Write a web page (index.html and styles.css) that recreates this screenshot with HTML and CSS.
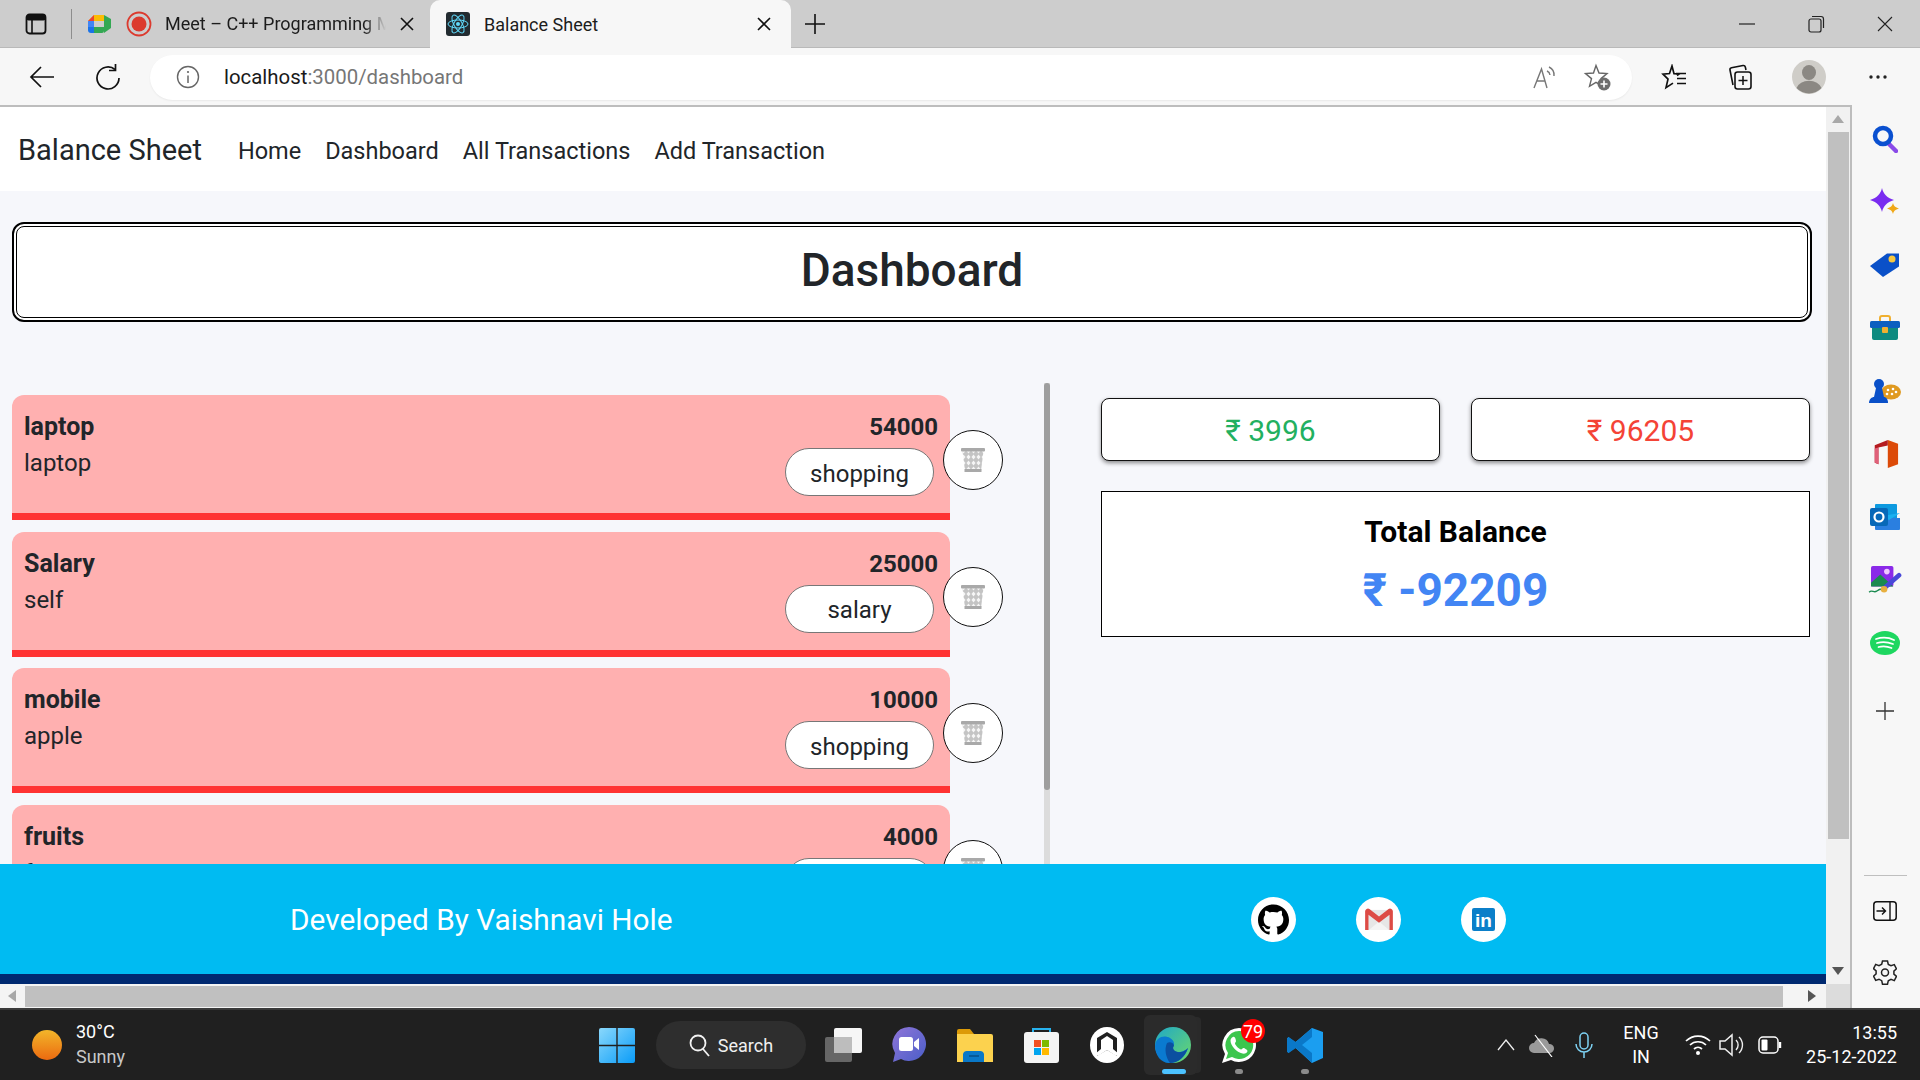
FILE: index.html
```html
<!DOCTYPE html>
<html lang="en">
<head>
<meta charset="utf-8">
<title>Balance Sheet</title>
<link rel="stylesheet" href="styles.css">
</head>
<body>
<svg class="sprite" aria-hidden="true">
  <defs>
    <pattern id="mesh" width="5" height="6" patternUnits="userSpaceOnUse">
      <rect width="5" height="6" fill="#c4c4c4"/>
      <path d="M2.500 .4 4.500 3 2.500 5.600 .5 3Z" fill="#f6f6f6"/>
    </pattern>
    <symbol id="trash" viewBox="0 0 24 24">
      <path d="M1.500 3h21L20 23H4Z" fill="url(#mesh)"/>
      <rect x="0" y="0" width="24" height="3.500" rx="1" fill="#a9a9a9"/>
      <rect x="3.500" y="21" width="17" height="3" fill="#a9a9a9"/>
    </symbol>
    <symbol id="x" viewBox="0 0 16 16">
      <path d="M2 2 14 14M14 2 2 14" stroke="#111" stroke-width="1.6" fill="none"/>
    </symbol>
  </defs>
</svg>
<div class="window">
  <header class="tabstrip">
    <svg class="tab-toggle" width="24" height="24" viewBox="0 0 24 24"><rect x="2.5" y="2.5" width="19" height="19" rx="3" fill="none" stroke="#111" stroke-width="1.8"/><rect x="2.5" y="2.5" width="19" height="6" rx="2" fill="#111"/><path d="M8 8v13" stroke="#111" stroke-width="1.6"/></svg>
    <span class="tab-sep"></span>
    <div class="tab">
      <svg width="24" height="20" viewBox="0 0 24 20"><path d="M6 1h10v6H0Z" fill="#fbbc04"/><path d="M0 7h6v6H0Z" fill="#4285f4"/><path d="M0 13h6v6H3a3 3 0 0 1-3-3Z" fill="#1a73e8"/><path d="M6 13h10v4a2 2 0 0 1-2 2H6Z" fill="#34a853"/><path d="M16 1v18l7-5V5Z" fill="#34a853"/><path d="M6 1v6H0Z" fill="#ea4335"/></svg>
      <svg class="rec" width="26" height="26" viewBox="0 0 26 26"><circle cx="13" cy="13" r="11.5" fill="none" stroke="#dc3a2e" stroke-width="1.8"/><circle cx="13" cy="13" r="7.5" fill="#dc3a2e"/></svg>
      <span class="tab-title faded">Meet – C++ Programming Masterclass</span>
      <svg class="tab-x" width="16" height="16"><use href="#x"/></svg>
    </div>
    <div class="tab active">
      <svg class="react" width="24" height="24" viewBox="0 0 24 24"><rect width="24" height="24" rx="3" fill="#222b30"/><g fill="none" stroke="#61dafb" stroke-width="1"><ellipse cx="12" cy="12" rx="10" ry="4"/><ellipse cx="12" cy="12" rx="10" ry="4" transform="rotate(60 12 12)"/><ellipse cx="12" cy="12" rx="10" ry="4" transform="rotate(120 12 12)"/></g><circle cx="12" cy="12" r="2" fill="#61dafb"/></svg>
      <span class="tab-title">Balance Sheet</span>
      <svg class="tab-x" width="16" height="16"><use href="#x"/></svg>
    </div>
    <svg class="new-tab" width="22" height="22" viewBox="0 0 22 22"><path d="M11 1v20M1 11h20" stroke="#111" stroke-width="1.6"/></svg>
    <div class="win-controls">
      <svg width="16" height="16" viewBox="0 0 16 16"><path d="M0 8h16" stroke="#222" stroke-width="1.2"/></svg>
      <svg width="18" height="18" viewBox="0 0 18 18"><rect x="2" y="4" width="12" height="13" rx="2" fill="none" stroke="#222" stroke-width="1.2"/><path d="M5 1.5h9a2.5 2.5 0 0 1 2.5 2.5v9" fill="none" stroke="#222" stroke-width="1.2"/></svg>
      <svg width="16" height="16" viewBox="0 0 16 16"><path d="M1 1 15 15M15 1 1 15" stroke="#222" stroke-width="1.1"/></svg>
    </div>
  </header>

  <div class="toolbar">
    <span class="tool first"><svg width="26" height="24" viewBox="0 0 26 24"><path d="M25 12H2M12 2 2 12l10 10" fill="none" stroke="#111" stroke-width="1.7"/></svg></span>
    <span class="tool gap22"><svg width="26" height="28" viewBox="0 0 26 28"><path d="M20 6.5A11 11 0 1 0 24 15" fill="none" stroke="#111" stroke-width="1.7"/><path d="M20.500 1v6.500H14" fill="none" stroke="#111" stroke-width="1.7"/></svg></span>
    <div class="omnibox">
      <svg width="24" height="24" viewBox="0 0 24 24"><circle cx="12" cy="12" r="10.500" fill="none" stroke="#666" stroke-width="1.4"/><path d="M12 10.500V18" stroke="#666" stroke-width="1.500"/><circle cx="12" cy="7" r="1.100" fill="#666"/></svg>
      <span class="url"><span class="url-host">localhost</span>:3000/dashboard</span>
      <span class="omni-end">
        <svg width="26" height="26" viewBox="0 0 26 26"><path d="M2 24 9.500 5 15 24M4.500 17h8" fill="none" stroke="#777" stroke-width="1.400"/><path d="M15 7a5 5 0 0 1 3 4M17 3a9 9 0 0 1 5 9" fill="none" stroke="#777" stroke-width="1.400"/></svg>
        <svg width="28" height="28" viewBox="0 0 28 28"><path d="M13 2.500 16 10l8 .6-6 5 2 7.900-7-4.200-6.500 4L8.500 15.600 2.500 10.600l8-.6Z" fill="none" stroke="#666" stroke-width="1.400"/><circle cx="21" cy="21" r="6.500" fill="#6d6d6d"/><path d="M21 17.500v7M17.500 21h7" stroke="#fff" stroke-width="1.600"/></svg>
      </span>
    </div>
    <span class="tool gap20"><svg width="26" height="26" viewBox="0 0 26 26"><path d="M15 11.500 17 10l-5-.4L10 2 7.500 9.500l-6.500.6 5 5-2 8.500 7-4.500" fill="none" stroke="#111" stroke-width="1.700" transform="translate(1 0)"/><path d="M15 9.500h10M16 14.500h9M16 19.500h9" fill="none" stroke="#111" stroke-width="1.700"/></svg></span>
    <span class="tool gap22"><svg width="26" height="28" viewBox="0 0 26 28"><path d="M6 22 3 7a2 2 0 0 1 1.500-2.300L16 2.500a2 2 0 0 1 2.300 1.500l.7 3" fill="none" stroke="#111" stroke-width="1.600"/><rect x="8" y="9" width="16" height="17" rx="2.500" fill="#f7f7f7" stroke="#111" stroke-width="1.600"/><path d="M16 13v9M11.500 17.500h9" stroke="#111" stroke-width="1.500"/></svg></span>
    <span class="tool gap25"><svg width="34" height="34" viewBox="0 0 34 34"><circle cx="17" cy="17" r="17" fill="#cfcdc8"/><ellipse cx="17" cy="12.500" rx="7" ry="7.500" fill="#8b8883"/><path d="M4.500 28a13 10 0 0 1 25 0 17 17 0 0 1-25 0Z" fill="#8b8883"/></svg></span>
    <span class="tool gap25"><svg width="20" height="6" viewBox="0 0 20 6"><circle cx="3" cy="3" r="1.700" fill="#222"/><circle cx="10" cy="3" r="1.700" fill="#222"/><circle cx="17" cy="3" r="1.700" fill="#222"/></svg></span>
  </div>

  <div class="viewport-row">
    <div class="viewport">
      <div class="viewport-inner">
        <div class="page">
          <nav class="navbar">
            <a class="brand">Balance Sheet</a>
            <a class="nav-link">Home</a>
            <a class="nav-link">Dashboard</a>
            <a class="nav-link">All Transactions</a>
            <a class="nav-link">Add Transaction</a>
          </nav>
          <main class="main">
            <h1 class="page-title">Dashboard</h1>
            <div class="columns">
              <div class="list-wrap">
                <div class="tx-list">
                  <div class="tx-row">
                    <article class="tx-card">
                      <div><div class="tx-name">laptop</div><div class="tx-desc">laptop</div></div>
                      <div class="tx-right"><div class="tx-amount">54000</div><span class="tx-pill">shopping</span></div>
                    </article>
                    <button class="tx-del"><svg width="24" height="24"><use href="#trash"/></svg></button>
                  </div>
                  <div class="tx-row">
                    <article class="tx-card">
                      <div><div class="tx-name">Salary</div><div class="tx-desc">self</div></div>
                      <div class="tx-right"><div class="tx-amount">25000</div><span class="tx-pill">salary</span></div>
                    </article>
                    <button class="tx-del"><svg width="24" height="24"><use href="#trash"/></svg></button>
                  </div>
                  <div class="tx-row">
                    <article class="tx-card">
                      <div><div class="tx-name">mobile</div><div class="tx-desc">apple</div></div>
                      <div class="tx-right"><div class="tx-amount">10000</div><span class="tx-pill">shopping</span></div>
                    </article>
                    <button class="tx-del"><svg width="24" height="24"><use href="#trash"/></svg></button>
                  </div>
                  <div class="tx-row">
                    <article class="tx-card">
                      <div><div class="tx-name">fruits</div><div class="tx-desc">farmart</div></div>
                      <div class="tx-right"><div class="tx-amount">4000</div><span class="tx-pill">shopping</span></div>
                    </article>
                    <button class="tx-del"><svg width="24" height="24"><use href="#trash"/></svg></button>
                  </div>
                </div>
                <div class="list-track"><div class="list-thumb"></div></div>
              </div>
              <aside class="summary">
                <div class="summary-pair">
                  <div class="stat income">₹ 3996</div>
                  <div class="stat expense">₹ 96205</div>
                </div>
                <div class="total">
                  <div class="total-label">Total Balance</div>
                  <div class="total-value">₹ -92209</div>
                </div>
              </aside>
            </div>
          </main>
          <footer class="footer">
            <span class="footer-text">Developed By Vaishnavi Hole</span>
            <div class="footer-links">
              <span class="social"><svg width="31" height="31" viewBox="0 0 24 24"><path d="M12 .297c-6.630 0-12 5.373-12 12 0 5.303 3.438 9.800 8.205 11.385.6.113.82-.258.82-.577 0-.285-.01-1.040-.015-2.040-3.338.724-4.042-1.610-4.042-1.610C4.422 18.070 3.633 17.700 3.633 17.700c-1.087-.744.084-.729.084-.729 1.205.084 1.838 1.236 1.838 1.236 1.070 1.835 2.809 1.305 3.495.998.108-.776.417-1.305.76-1.605-2.665-.3-5.466-1.332-5.466-5.930 0-1.310.465-2.380 1.235-3.220-.135-.303-.54-1.523.105-3.176 0 0 1.005-.322 3.300 1.230.96-.267 1.980-.399 3-.405 1.020.006 2.040.138 3 .405 2.280-1.552 3.285-1.230 3.285-1.230.645 1.653.24 2.873.12 3.176.765.84 1.230 1.910 1.230 3.220 0 4.610-2.805 5.625-5.475 5.920.42.36.81 1.096.81 2.220 0 1.606-.015 2.896-.015 3.286 0 .315.21.69.825.57C20.565 22.092 24 17.592 24 12.297c0-6.627-5.373-12-12-12" fill="#000"/></svg></span>
              <span class="social"><svg width="28" height="22" viewBox="0 0 29 23"><path d="M1 2h27v21H1Z" fill="#e6e6e6"/><path d="M4 23 14.500 14 25 23Z" fill="#f4f4f4"/><path d="M0 3.500A3 3 0 0 1 4.500 1l10 8 10-8A3 3 0 0 1 29 3.500V23h-3.500V7l-11 8.500L3.500 7v16H0Z" fill="#dd4b45"/></svg></span>
              <span class="social"><svg width="23" height="23" viewBox="0 0 23 23"><rect width="23" height="23" rx="2" fill="#0b7fc9"/><text x="11.500" y="19" text-anchor="middle" class="in-mark">in</text></svg></span>
            </div>
          </footer>
        </div>
        <div class="vscroll">
          <svg width="12" height="8" viewBox="0 0 12 8"><path d="M6 0 12 8H0Z" fill="#a8a8a8"/></svg>
          <div class="vscroll-thumb"></div>
          <svg class="vscroll-down" width="12" height="8" viewBox="0 0 12 8"><path d="M0 0H12L6 8Z" fill="#555"/></svg>
        </div>
      </div>
      <div class="hscroll">
        <svg width="8" height="12" viewBox="0 0 8 12"><path d="M8 0V12L0 6Z" fill="#a8a8a8"/></svg>
        <div class="hscroll-thumb"></div>
        <svg width="8" height="12" viewBox="0 0 8 12"><path d="M0 0V12L8 6Z" fill="#555"/></svg>
        <div class="hscroll-corner"></div>
      </div>
    </div>

    <aside class="sidebar">
      <svg width="26" height="28" viewBox="0 0 26 28"><path d="M16 18l8 8" stroke="#8a4be8" stroke-width="4.500" stroke-linecap="round"/><circle cx="11" cy="11" r="8" fill="none" stroke="#0a50d0" stroke-width="4.500"/></svg>
      <svg width="30" height="28" viewBox="0 0 30 28"><path d="M12 0c1.500 6 4.500 9.500 12 12-7.500 2.500-10.500 6-12 12-1.500-6-4.500-9.500-12-12 7.500-2.500 10.500-6 12-12Z" fill="#7a2cf0"/><path d="M23 15c.8 3 2.200 4.400 6 5.500-3.800 1.100-5.200 2.500-6 5.500-.8-3-2.200-4.400-6-5.500 3.800-1.100 5.200-2.500 6-5.500Z" fill="#f0a818"/></svg>
      <svg width="30" height="26" viewBox="0 0 30 26"><path d="M0 14 17 1.500h12v13L13 25Z" fill="#0a50c8"/><circle cx="22" cy="7" r="3.500" fill="#f8c840"/></svg>
      <svg width="30" height="26" viewBox="0 0 30 26"><path d="M10 7V3a2 2 0 0 1 2-2h6a2 2 0 0 1 2 2v4" fill="none" stroke="#f0b030" stroke-width="2"/><rect x="2" y="10" width="26" height="15" rx="2" fill="#0e8a80"/><rect y="6" width="30" height="7" rx="1.500" fill="#0a5fc0"/><rect x="12" y="12" width="6" height="6" rx="1" fill="#f0b030"/></svg>
      <svg width="32" height="26" viewBox="0 0 32 26"><ellipse cx="22" cy="14" rx="10" ry="7.500" fill="#e09a20"/><g fill="#fff"><circle cx="19" cy="12" r="1.300"/><circle cx="24" cy="11" r="1.300"/><circle cx="27" cy="14" r="1.300"/><circle cx="23" cy="16" r="1.300"/><circle cx="18" cy="16" r="1.300"/></g><circle cx="10" cy="6" r="5" fill="#0a50c8"/><path d="M7 10h6l2 9h-10Z" fill="#0a50c8"/><path d="M0 25c0-4 3-6 5-6h10c2 0 4 2 4 6Z" fill="#0a50c8"/></svg>
      <svg width="30" height="30" viewBox="0 0 30 30"><path d="M18 0 29 4v22l-11 4Z" fill="#dc4a08"/><path d="M18 0 4 5.500v19L18 30l-10-4V8l10-2Z" fill="#b51c20"/><path d="M8 8 4 9v15l4 2Z" fill="#e0607a"/></svg>
      <svg width="30" height="26" viewBox="0 0 30 26"><rect x="5" y="0" width="22" height="24" rx="1" fill="#0d9ae0"/><path d="M5 14h25v11a1 1 0 0 1-1 1H6a1 1 0 0 1-1-1Z" fill="#2a7fe0"/><path d="M30 9 19 16l-7-4" fill="#1ab0f0"/><rect y="4" width="18" height="18" rx="2" fill="#0768b8"/><circle cx="9" cy="13" r="4.500" fill="none" stroke="#fff" stroke-width="2.200"/></svg>
      <svg width="34" height="30" viewBox="0 0 34 30"><rect x="2" y="0" width="24" height="22" rx="2" fill="#8a2ae8"/><circle cx="19" cy="6" r="3" fill="#f0c8ff"/><path d="M2 18 12 9l14 13H2Z" fill="#1a8a50"/><path d="M0 28c3-3 5 1 8-1s4-3 6-1" fill="none" stroke="#1a8a50" stroke-width="1.500"/><path d="M32 10 17 23" stroke="#4848d8" stroke-width="5" stroke-linecap="round"/><circle cx="16" cy="25" r="3.500" fill="#e8b040"/></svg>
      <svg width="30" height="24" viewBox="0 0 30 24"><ellipse cx="15" cy="12" rx="15" ry="12" fill="#1ed760"/><path d="M6 8c6-2 13-1.500 18 1M7 12c5-1.500 11-1 16 1M8.500 16c4-1 9-.7 13 1" fill="none" stroke="#fff" stroke-width="1.800" stroke-linecap="round"/></svg>
      <svg class="side-plus" width="18" height="18" viewBox="0 0 18 18"><path d="M9 0v18M0 9h18" stroke="#333" stroke-width="1.300"/></svg>
      <div class="side-bottom">
        <span class="side-divider"></span>
        <svg width="24" height="20" viewBox="0 0 24 20"><rect x=".8" y=".8" width="22.400" height="18.400" rx="3" fill="none" stroke="#111" stroke-width="1.500"/><path d="M17 1v18M3.500 10h9M9 6.500l3.500 3.500L9 13.500" fill="none" stroke="#111" stroke-width="1.400"/></svg>
        <svg class="side-gear" width="24" height="26" viewBox="0 0 24 26"><path d="M9.500 1h5l.8 3.500 2.700 1.300 3.300-1.200 2.200 4.200-2.600 2.300v3l2.600 2.300-2.200 4.200-3.300-1.200-2.700 1.300-.8 3.500h-5l-.8-3.500L6 19.200l-3.300 1.200L.5 16.200l2.600-2.300v-3L.5 8.600l2.200-4.200L6 5.600l2.700-1.300Z" fill="none" stroke="#222" stroke-width="1.500"/><circle cx="12" cy="12.500" r="3.500" fill="none" stroke="#222" stroke-width="1.500"/></svg>
      </div>
    </aside>
  </div>

  <footer class="taskbar">
    <div class="weather">
      <svg width="30" height="30" viewBox="0 0 30 30"><defs><linearGradient id="sun" x1="0" y1="0" x2="0" y2="1"><stop offset="0" stop-color="#f2b62a"/><stop offset="1" stop-color="#ec6a10"/></linearGradient></defs><circle cx="15" cy="15" r="15" fill="url(#sun)"/></svg>
      <div class="weather-text"><div>30°C</div><div class="weather-sub">Sunny</div></div>
    </div>
    <div class="task-center">
      <span class="task-cell"><svg width="36" height="35" viewBox="0 0 36 35"><defs><linearGradient id="win" x1="0" y1="0" x2="1" y2="1"><stop offset="0" stop-color="#8ad8fc"/><stop offset="1" stop-color="#0a9cf8"/></linearGradient></defs><path d="M2 0h15.300v16.800H0V2a2 2 0 0 1 2-2ZM18.700 0H34a2 2 0 0 1 2 2v14.800H18.700ZM0 18.200h17.300V35H2a2 2 0 0 1-2-2ZM18.700 18.200H36V33a2 2 0 0 1-2 2H18.700Z" fill="url(#win)"/></svg></span>
      <div class="task-search"><svg width="21" height="23" viewBox="0 0 21 23"><circle cx="9" cy="9" r="7.500" fill="none" stroke="#f2f2f2" stroke-width="1.800"/><path d="M14 15l6 7" stroke="#f2f2f2" stroke-width="1.800"/></svg><span>Search</span></div>
      <span class="task-cell gap4"><svg width="37" height="34" viewBox="0 0 37 34"><rect y="9" width="27" height="25" rx="2" fill="#666"/><rect x="9" width="28" height="25" rx="2" fill="#f6f6f6"/><rect x="9" y="9" width="18" height="16" fill="#bdbdbd"/></svg></span>
      <span class="task-cell"><svg width="34" height="36" viewBox="0 0 34 36"><defs><linearGradient id="teams" x1="0" y1="0" x2="1" y2="1"><stop offset="0" stop-color="#8f75d8"/><stop offset="1" stop-color="#4a5ec8"/></linearGradient></defs><path d="M17 0a17 17 0 1 1-8 32l-8 3 2-9A17 17 0 0 1 17 0Z" fill="url(#teams)"/><rect x="7" y="10" width="14" height="14" rx="2.500" fill="#fff"/><path d="M22 15l5-4v12l-5-4Z" fill="#fff"/></svg></span>
      <span class="task-cell"><svg width="36" height="33" viewBox="0 0 36 33"><path d="M0 2a2 2 0 0 1 2-2h11l4 5H0Z" fill="#dc9a08"/><path d="M0 5h34a2 2 0 0 1 2 2v26H0Z" fill="#fcd24e"/><path d="M6 33v-8a4 4 0 0 1 4-3h13a4 4 0 0 1 4 3v8Z" fill="#0a78c8"/><path d="M12 27h10" stroke="#064f88" stroke-width="1.500"/></svg></span>
      <span class="task-cell"><svg width="35" height="35" viewBox="0 0 35 35"><path d="M9 6V1h17v5" fill="none" stroke="#27b2ee" stroke-width="2"/><rect y="4" width="35" height="31" rx="3" fill="#f4f4f4"/><rect x="10" y="12" width="7" height="7" fill="#f25022"/><rect x="18" y="12" width="7" height="7" fill="#7fba00"/><rect x="10" y="20" width="7" height="7" fill="#00a4ef"/><rect x="18" y="20" width="7" height="7" fill="#ffb900"/></svg></span>
      <span class="task-cell"><svg width="34" height="36" viewBox="0 0 34 36"><ellipse cx="17" cy="18" rx="17" ry="18" fill="#fff"/><path d="M17 5 7 11v18l10-6 10 6V11Z" fill="#202020"/><path d="M17 9 11 13v10l6-4 6 4V13Z" fill="#fff"/><path d="M8 29l9-6 9 6 3-2-12-10L5 27Z" fill="#fff"/></svg></span>
      <span class="task-cell edge">
        <svg width="36" height="36" viewBox="0 0 36 36"><defs><linearGradient id="edgeA" x1="0" y1="0" x2="1" y2="1"><stop offset="0" stop-color="#1fa8c8"/><stop offset="1" stop-color="#6cd86a"/></linearGradient></defs><circle cx="18" cy="18" r="18" fill="url(#edgeA)"/><path d="M0 19C1 9 10 8 15 11c4 2.500 5 6 3 8-3 3 2 7 7 6 3-.6 6-2 8-4-3 9-10 15-19 15C6 36 0 28 0 19Z" fill="#0a7ad0"/><path d="M12 16c3-2 7 0 7 3-3 3 2 7 7 6 3-.6 5-2 7-4-3 9-10 15-18 15-4-5-6-14-3-20Z" fill="#0b4fa0"/></svg>
        <span class="edge-dot"></span>
      </span>
      <span class="task-cell">
        <svg width="36" height="36" viewBox="0 0 36 36"><path d="M18 1a17 17 0 1 1-8 32l-9 3 3-9A17 17 0 0 1 18 1Z" fill="#fff"/><path d="M18 4a14 14 0 1 1-7 26l-6 2 2-6A14 14 0 0 1 18 4Z" fill="#3cc64d"/><path d="M12 10c2-1 3 3 3 4s-1 1.500-1 2.500 3 5 6 6c1 0 1.500-1.500 2.500-1.500s4 2 4 3c0 2-3 3-5 2.500-6-1-12-8-12-13 0-1.500 1-3 2.500-3.500Z" fill="#fff"/></svg>
        <span class="dot"></span>
        <span class="badge">79</span>
      </span>
      <span class="task-cell">
        <svg width="36" height="36" viewBox="0 0 36 36"><path d="M25 1 36 5v26l-11 5-17-15.500L1.500 26 0 24.500V11.500L1.500 10 8 15.500Z" fill="#1b9ef0"/><path d="M25 1 9 15l-7.500-5L0 11.500v13L1.500 26 9 21l16 15Zm0 9v16l-10-8Z" fill="#0a78c8"/></svg>
        <span class="dot"></span>
      </span>
    </div>
    <div class="tray">
      <span class="tray-cell w36"><svg width="18" height="12" viewBox="0 0 18 12"><path d="M1 11 9 1l8 10" fill="none" stroke="#eee" stroke-width="1.300"/></svg></span>
      <span class="tray-cell w36"><svg width="26" height="24" viewBox="0 0 26 24"><path d="M5 20a5 5 0 0 1 0-10 8 8 0 0 1 15 1 4.500 4.500 0 0 1 1 9Z" fill="#9a9a9a"/><path d="M6 2 23 24" stroke="#fff" stroke-width="1.200"/></svg></span>
      <span class="tray-cell w48"><svg width="18" height="26" viewBox="0 0 18 26"><rect x="5" y="1" width="8" height="16" rx="4" fill="none" stroke="#7ed2f4" stroke-width="1.500"/><path d="M1 12a8 8 0 0 0 16 0M9 20v6" fill="none" stroke="#7ed2f4" stroke-width="1.500"/></svg></span>
      <div class="tray-lang"><div>ENG</div><div>IN</div></div>
      <span class="tray-cell w34 gap7"><svg width="26" height="22" viewBox="0 0 26 22"><path d="M1 7a17 17 0 0 1 24 0M5 11a11.500 11.500 0 0 1 16 0M9 15a6 6 0 0 1 8 0" fill="none" stroke="#fff" stroke-width="1.700"/><circle cx="13" cy="19" r="2" fill="#fff"/></svg></span>
      <span class="tray-cell w34"><svg width="26" height="26" viewBox="0 0 26 26"><path d="M1 9h5l7-6v20l-7-6H1Z" fill="none" stroke="#eee" stroke-width="1.500"/><path d="M17 8a7 7 0 0 1 0 10M20 5a11 11 0 0 1 0 16" fill="none" stroke="#eee" stroke-width="1.400"/></svg></span>
      <span class="tray-cell w42"><svg width="24" height="18" viewBox="0 0 24 18"><rect x="1" y="1" width="19" height="16" rx="4" fill="none" stroke="#fff" stroke-width="1.500"/><rect x="3.500" y="3.500" width="6" height="11" rx="1" fill="#fff"/><path d="M22 6v6" stroke="#fff" stroke-width="2.400"/></svg></span>
      <div class="clock"><div>13:55</div><div>25-12-2022</div></div>
    </div>
  </footer>
</div>
</body>
</html>
```
FILE: styles.css
```css
* { box-sizing: border-box; }
html, body { margin: 0; height: 100%; overflow: hidden; }
body { font-family: Roboto, "Liberation Sans", "Noto Sans", sans-serif; color: #212529; }
svg { display: block; flex: none; }
.sprite { position: absolute; width: 0; height: 0; }
.window { width: 1920px; height: 1080px; display: flex; flex-direction: column; }

/* browser tab strip */
.tabstrip { height: 48px; background: #cdcdcd; display: flex; align-items: center; border-bottom: 1px solid #b9b9b9; flex: none; }
.tab-toggle { margin-left: 24px; }
.tab-sep { width: 1px; height: 30px; background: #8d8d8d; margin-left: 23px; }
.tab { height: 48px; display: flex; align-items: center; }
.tab:first-of-type { margin-left: 16px; width: 342px; }
.rec { margin-left: 14px; }
.tab-title { font-size: 18px; color: #1c1c1c; margin-left: 13px; white-space: nowrap; overflow: hidden; width: 221px; }
.faded { -webkit-mask-image: linear-gradient(90deg, #000 90%, transparent); mask-image: linear-gradient(90deg, #000 90%, transparent); }
.tab-x { margin-left: 13px; }
.tab.active { width: 361px; background: #f7f7f7; border-radius: 10px 10px 0 0; padding-left: 16px; margin-top: 1px; }
.tab.active .tab-title { width: 259px; margin-left: 14px; }
.new-tab { margin-left: 13px; }
.win-controls { margin-left: auto; display: flex; align-items: center; gap: 52px; padding-right: 27px; }

/* toolbar */
.toolbar { height: 57px; background: #f7f7f7; display: flex; align-items: center; flex: none; }
.tool { width: 44px; height: 44px; display: flex; align-items: center; justify-content: center; }
.first { margin-left: 20px; }
.gap20 { margin-left: 20px; }
.gap22 { margin-left: 22px; }
.gap25 { margin-left: 25px; }
.omnibox { margin-left: 20px; width: 1482px; height: 45px; margin-top: 1px; background: #fff; border-radius: 23px; display: flex; align-items: center; padding: 0 21px 0 26px; box-shadow: 0 1px 2px rgba(0,0,0,.06); }
.url { margin-left: 24px; font-size: 20.4px; color: #767676; }
.url-host { color: #1a1a1a; }
.omni-end { margin-left: auto; display: flex; align-items: center; gap: 25px; }

/* viewport */
.viewport-row { flex: none; height: 903px; display: flex; background: #f7f7f7; }
.viewport { width: 1852px; height: 903px; border-top: 2px solid #bdbdbd; border-right: 2px solid #bdbdbd; display: flex; flex-direction: column; }
.viewport-inner { height: 877px; display: flex; flex: none; }
.page { width: 1826px; height: 877px; display: flex; flex-direction: column; background: #f6f7fb; overflow: hidden; }
.navbar { height: 84px; flex: none; background: #fff; display: flex; align-items: center; padding: 3px 0 0 18px; }
.brand { font-size: 29px; margin: -1px 36px 0 0; color: #212529; }
.nav-link { font-size: 23.5px; margin-right: 24px; color: #212529; }

.main { flex: 1; min-height: 0; display: flex; flex-direction: column; overflow: hidden; padding-top: 31px; }
.page-title { margin: 0 14px 61px 12px; height: 100px; flex: none; background: #fff; border: 2px solid #000; outline: 1px solid #000; outline-offset: -5px; border-radius: 12px; display: flex; align-items: center; justify-content: center; padding-bottom: 5px; font-size: 46px; font-weight: 500; color: #212529; }
.columns { flex: 1; min-height: 0; display: flex; }

.list-wrap { width: 1050px; height: 100%; flex: none; display: flex; }
.tx-list { width: 1044px; height: 100%; overflow: hidden; padding: 12px 0 0 12px; flex: none; }
.list-track { width: 6px; height: 100%; flex: none; background: #dcdcdc; }
.list-thumb { height: 407px; background: #9e9e9e; border-radius: 3px; }
.tx-row { display: flex; align-items: flex-start; height: 136.67px; }
.tx-card { width: 938px; height: 125px; flex: none; background: #ffb0b0; border-bottom: 7px solid #ff3333; border-radius: 12px 12px 0 0; padding: 14px 12px 0; display: flex; justify-content: space-between; font-size: 24px; line-height: 36px; }
.tx-name { font-weight: 700; font-size: 25px; }
.tx-right { display: flex; flex-direction: column; align-items: flex-end; }
.tx-amount { font-weight: 700; }
.tx-pill { margin: 3px 4px 0 0; width: 149px; height: 48px; padding-top: 3px; background: #fff; border: 1px solid #777; border-radius: 24px; display: flex; align-items: center; justify-content: center; }
.tx-del { width: 60px; height: 60px; margin: 35px 0 0 -7px; position: relative; padding: 0; background: #fff; border: 1.5px solid #111; border-radius: 50%; display: flex; align-items: center; justify-content: center; }

.summary { width: 709px; margin-left: 51px; padding-top: 15px; flex: none; }
.summary-pair { display: flex; justify-content: space-between; }
.stat { width: 339px; height: 63px; padding-top: 1px; background: #fff; border: 1.5px solid #111; border-radius: 8px; box-shadow: 0 2px 4px rgba(0,0,0,.45); display: flex; align-items: center; justify-content: center; font-size: 30px; }
.income { color: #22b060; }
.expense { color: #f44336; }
.total { margin-top: 30px; height: 146px; background: #fff; border: 1px solid #000; text-align: center; padding-top: 18px; }
.total-label { font-size: 30px; line-height: 44px; font-weight: 700; color: #000; }
.total-value { font-size: 46px; line-height: 66px; font-weight: 700; color: #4285f4; margin-top: 3px; }

.footer { height: 120px; flex: none; background: #00bbf2; border-bottom: 10px solid #002970; display: flex; align-items: center; padding: 0 320px 0 290px; color: #fff; }
.footer-text { font-size: 29.8px; }
.footer-links { margin-left: auto; display: flex; gap: 60px; }
.social { width: 45px; height: 45px; border-radius: 50%; background: #fff; display: flex; align-items: center; justify-content: center; }
.in-mark { font-family: "Liberation Sans", sans-serif; font-weight: 700; font-size: 19px; fill: #fff; }

.vscroll { width: 24px; height: 877px; flex: none; background: #f1f1f1; display: flex; flex-direction: column; align-items: center; padding-top: 8px; }
.vscroll-thumb { width: 21px; height: 707px; margin-top: 9px; background: #c0c0c0; }
.vscroll-down { margin-top: auto; margin-bottom: 9px; }
.hscroll { height: 24px; flex: none; display: flex; align-items: center; background: #f4f4f4; padding-left: 8px; }
.hscroll-thumb { width: 1758px; height: 21px; margin-left: 9px; margin-right: 25px; background: #c0c0c0; }
.hscroll-corner { width: 24px; height: 24px; margin-left: 10px; background: #dcdcdc; }

/* edge sidebar */
.sidebar { width: 68px; height: 903px; display: flex; flex-direction: column; align-items: center; padding: 20px 2px 0 0; }
.sidebar > svg { height: 28px; margin-bottom: 35px; }
.sidebar > .side-plus { margin-top: 5px; margin-bottom: 0; }
.side-bottom { margin-top: auto; padding-bottom: 22px; width: 100%; display: flex; flex-direction: column; align-items: center; }
.side-divider { width: 43px; height: 1px; background: #bfbfbf; margin-bottom: 25px; }
.side-gear { margin-top: 39px; }

/* taskbar */
.taskbar { height: 72px; flex: none; background: #202020; border-top: 2px solid #3a3a3a; display: flex; align-items: center; color: #fff; }
.weather { width: 584px; flex: none; display: flex; align-items: center; padding-left: 32px; gap: 14px; font-size: 18px; line-height: 25px; }
.weather-text { margin-top: -3px; }
.weather-sub { color: #c8c8c8; }
.task-center { display: flex; align-items: center; }
.task-cell { width: 66px; height: 60px; display: flex; align-items: center; justify-content: center; position: relative; }
.gap4 { margin-left: 4px; }
.task-search { width: 150px; height: 48px; margin-left: 6px; background: #2e2e2e; border-radius: 24px; display: flex; align-items: center; justify-content: center; gap: 8px; font-size: 18px; color: #f0f0f0; }
.edge { width: 53px; margin: 0 9px 0 4px; padding-left: 5px; background: #2b2b2b; border-radius: 6px; box-shadow: 6px 0 0 -2px #2a2a2a; }
.edge-dot { position: absolute; bottom: 1px; left: 18px; width: 24px; height: 5px; border-radius: 3px; background: #4cc2ff; }
.dot { position: absolute; bottom: 1px; left: 29px; width: 8px; height: 5px; border-radius: 3px; background: #8a8a8a; }
.badge { position: absolute; top: 4px; right: 7px; width: 24px; height: 24px; border-radius: 50%; background: #f00; color: #fff; font-size: 18px; display: flex; align-items: center; justify-content: center; }
.tray { margin-left: auto; padding-right: 23px; display: flex; align-items: center; }
.tray-cell { display: flex; align-items: center; justify-content: center; height: 40px; }
.w36 { width: 36px; }
.w48 { width: 48px; }
.w34 { width: 34px; }
.w42 { width: 42px; }
.gap7 { margin-left: 7px; }
.tray-lang { width: 66px; text-align: center; font-size: 18px; line-height: 24px; }
.clock { width: 106px; text-align: right; font-size: 18px; line-height: 24px; }
```
